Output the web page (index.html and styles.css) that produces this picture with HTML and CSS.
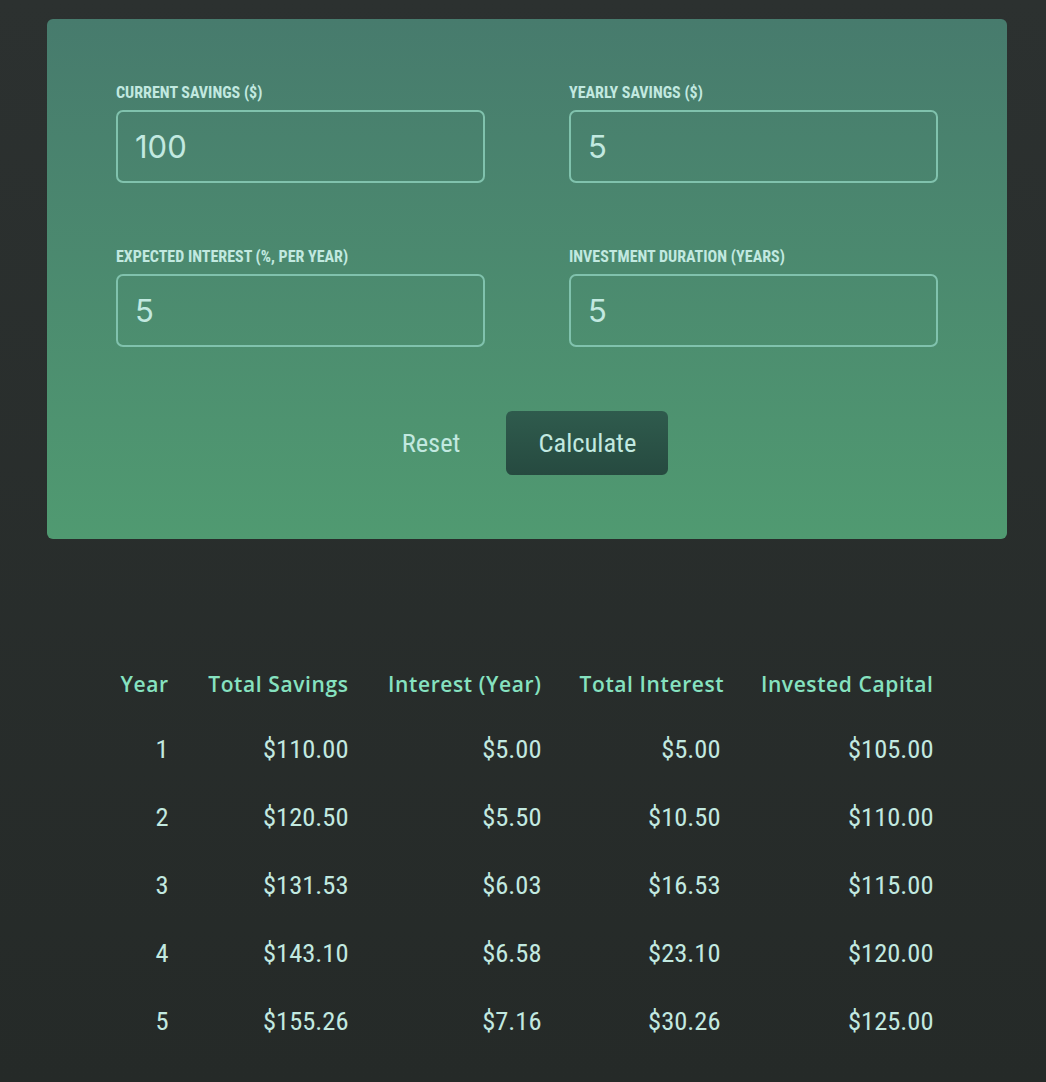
FILE: index.html
```html
<!DOCTYPE html>
<html lang="en">
<head>
<meta charset="utf-8">
<title>Investment Calculator</title>
<link rel="stylesheet" href="styles.css">
</head>
<body>
<main class="page">
  <form class="form">
    <div class="input-group">
      <p class="field">
        <label for="current-savings">Current Savings ($)</label>
        <input type="number" id="current-savings" value="100">
      </p>
      <p class="field">
        <label for="yearly-contribution">Yearly Savings ($)</label>
        <input type="number" id="yearly-contribution" value="5">
      </p>
    </div>
    <div class="input-group">
      <p class="field">
        <label for="expected-return">Expected Interest (%, per year)</label>
        <input type="number" id="expected-return" value="5">
      </p>
      <p class="field">
        <label for="duration">Investment Duration (years)</label>
        <input type="number" id="duration" value="5">
      </p>
    </div>
    <p class="actions">
      <button type="reset" class="button-alt">Reset</button>
      <button type="submit" class="button">Calculate</button>
    </p>
  </form>

  <table class="result">
    <colgroup>
      <col class="c-year">
      <col class="c-savings">
      <col class="c-int-year">
      <col class="c-int-total">
      <col class="c-capital">
    </colgroup>
    <thead>
      <tr>
        <th>Year</th>
        <th>Total Savings</th>
        <th>Interest (Year)</th>
        <th>Total Interest</th>
        <th>Invested Capital</th>
      </tr>
    </thead>
    <tbody>
      <tr><td>1</td><td>$110.00</td><td>$5.00</td><td>$5.00</td><td>$105.00</td></tr>
      <tr><td>2</td><td>$120.50</td><td>$5.50</td><td>$10.50</td><td>$110.00</td></tr>
      <tr><td>3</td><td>$131.53</td><td>$6.03</td><td>$16.53</td><td>$115.00</td></tr>
      <tr><td>4</td><td>$143.10</td><td>$6.58</td><td>$23.10</td><td>$120.00</td></tr>
      <tr><td>5</td><td>$155.26</td><td>$7.16</td><td>$30.26</td><td>$125.00</td></tr>
    </tbody>
  </table>
</main>
</body>
</html>
```

FILE: styles.css
```css
* {
  box-sizing: border-box;
}

html {
  height: 100%;
  font-family: "Roboto Condensed", "Liberation Sans Narrow", Roboto, sans-serif;
  font-stretch: condensed;
}

body {
  margin: 0;
  min-height: 100%;
  background: linear-gradient(180deg, #2c3130 0%, #252a28 100%);
  color: #c2e9e0;
}

.page {
  padding: 19px 39px 10px 47px;
}

.form {
  width: 960px;
  padding: 64px 69px;
  border-radius: 6px;
  background: linear-gradient(180deg, #477b6d 0%, #509a71 100%);
}

.input-group {
  display: flex;
  gap: 84px;
  margin-bottom: 64px;
}

.field {
  flex: 1;
  margin: 0;
}

.field label {
  display: block;
  margin-bottom: 8px;
  font-size: 16px;
  line-height: 19px;
  font-weight: 700;
  text-transform: uppercase;
}

.field input {
  display: block;
  width: 100%;
  height: 73px;
  padding: 0 17px;
  border: 2px solid #80c2ad;
  border-radius: 7px;
  background: transparent;
  color: #c2e9e0;
  font-family: Inter, "Liberation Sans", sans-serif;
  font-stretch: normal;
  font-size: 31px;
  outline: none;
  -moz-appearance: textfield;
  appearance: textfield;
}

.field input::-webkit-inner-spin-button,
.field input::-webkit-outer-spin-button {
  -webkit-appearance: none;
  margin: 0;
}

.actions {
  display: flex;
  justify-content: center;
  align-items: center;
  gap: 46px;
  margin: 0;
  padding-left: 16px;
}

.button-alt,
.button {
  font-family: "Roboto Condensed", "Liberation Sans Narrow", Roboto, sans-serif;
  font-stretch: condensed;
  font-size: 26.5px;
  line-height: 32px;
  color: #c2e9e0;
  border: none;
  cursor: pointer;
}

.button-alt {
  padding: 0;
  background: transparent;
}

.button {
  height: 64px;
  padding: 0 32px;
  border-radius: 6px;
  background: linear-gradient(180deg, #2f5b4d 0%, #264a40 100%);
}

.result {
  width: 889px;
  margin: 96px auto 0;
  table-layout: fixed;
  border-spacing: 38px 37px;
  text-align: right;
}

.c-year { width: 48px; }
.c-savings { width: 142px; }
.c-int-year { width: 155px; }
.c-int-total { width: 141px; }
.c-capital { width: 175px; }

.result th {
  padding: 0;
  font-family: "Open Sans", "Noto Sans", sans-serif;
  font-stretch: normal;
  font-size: 21px;
  line-height: 24px;
  font-weight: 600;
  letter-spacing: 0.6px;
  color: #86e2c0;
  white-space: nowrap;
}

.result td {
  padding: 0;
  font-size: 26.5px;
  line-height: 31px;
  color: #c2e9e0;
  white-space: nowrap;
}
```
